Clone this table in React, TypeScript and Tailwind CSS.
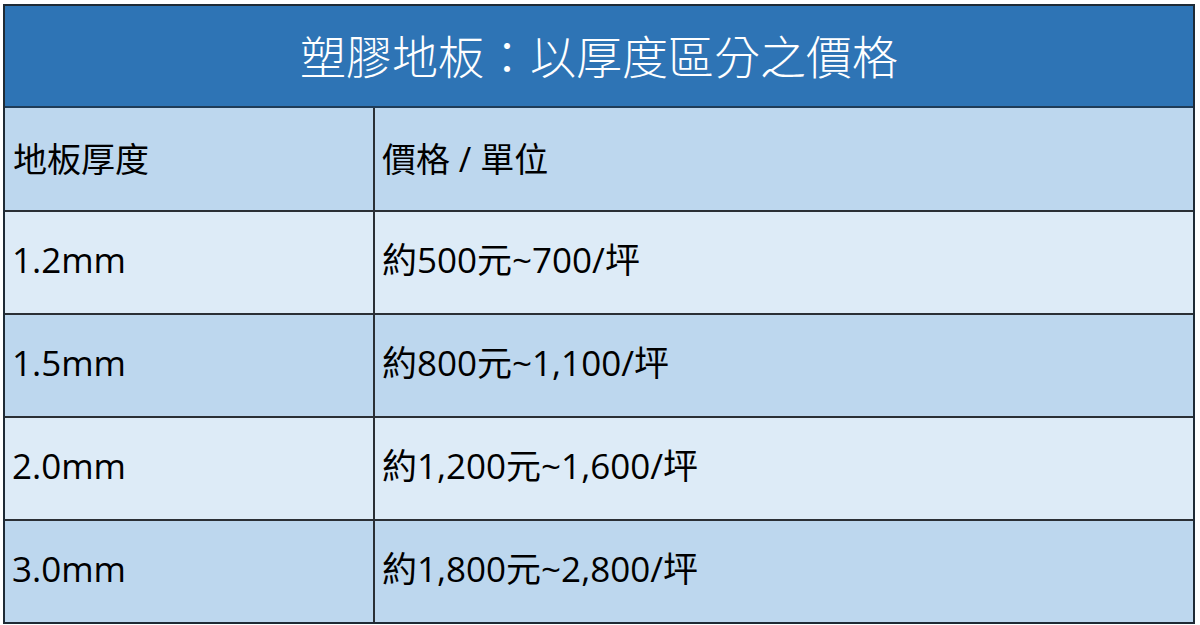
const ROWS = [
  { thick: "1.2mm", price: "約500元~700/坪" },
  { thick: "1.5mm", price: "約800元~1,100/坪" },
  { thick: "2.0mm", price: "約1,200元~1,600/坪" },
  { thick: "3.0mm", price: "約1,800元~2,800/坪" },
];

export default function App() {
  return (
    <div
      className="w-[1200px] h-[625px] bg-white pt-[4px] pl-[3px]"
      style={{ fontFamily: '"Open Sans", "Noto Sans CJK TC", "Noto Sans", sans-serif' }}
    >
      {/* table */}
      <div className="w-[1192px] border-2 border-[#1e2a35] bg-[#bdd7ee]">
        <div className="h-[102px] bg-[#2e74b5] flex items-center justify-center text-white text-[46px] font-light border-b-2 border-[#1f3c58]">
          塑膠地板：以厚度區分之價格
        </div>

        <div className="grid grid-cols-[370px_1fr] h-[102px] bg-[#bdd7ee] text-black text-[34px]">
          <div className="flex items-center pl-[8px] border-r-2 border-[#2a2f35]">地板厚度</div>
          <div className="flex items-center pl-[7px]">價格 / 單位</div>
        </div>

        {ROWS.map((row, i) => (
          <div
            key={row.thick}
            className={
              "grid grid-cols-[370px_1fr] h-[103px] border-t-2 border-[#2a2f35] text-black text-[35px] " +
              (i % 2 === 0 ? "bg-[#ddebf7]" : "bg-[#bdd7ee]")
            }
          >
            <div className="flex items-center pl-[7px] pb-[4px] border-r-2 border-[#2a2f35]">{row.thick}</div>
            <div className="flex items-center pl-[7px] pb-[4px]">{row.price}</div>
          </div>
        ))}
      </div>
    </div>
  );
}
